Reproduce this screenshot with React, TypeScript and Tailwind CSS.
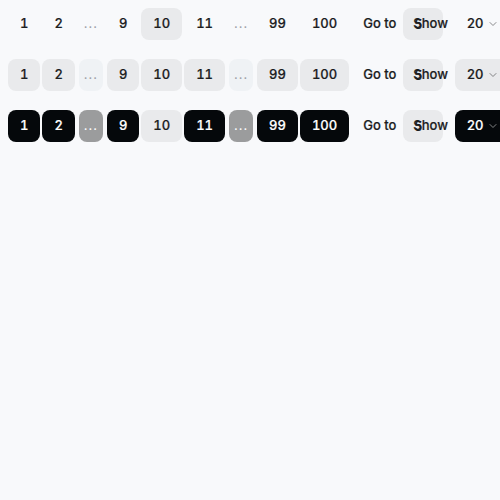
import { ChevronDown } from "lucide-react";

type Variant = "ghost" | "soft" | "solid";

const items: (number | "gap")[] = [1, 2, "gap", 9, 10, 11, "gap", 99, 100];
const current = 10;

function pageClass(variant: Variant, active: boolean) {
  if (active) return "bg-[#e9eaec] text-[#1c1d1f]";
  if (variant === "ghost") return "bg-transparent text-[#1c1d1f]";
  if (variant === "soft") return "bg-[#e9eaec] text-[#1c1d1f]";
  return "bg-[#05080b] text-white";
}

function gapClass(variant: Variant) {
  if (variant === "ghost") return "bg-transparent text-[#9ca0a6]";
  if (variant === "soft") return "bg-[#eff2f5] text-[#9ca0a6]";
  return "bg-[#9b9c9d] text-white";
}

function selectClass(variant: Variant) {
  if (variant === "ghost") return "bg-transparent text-[#1c1d1f]";
  if (variant === "soft") return "bg-[#e9eaec] text-[#1c1d1f]";
  return "bg-[#05080b] text-white";
}

function PaginationRow({ variant }: { variant: Variant }) {
  return (
    <div className="flex h-8 items-center whitespace-nowrap">
      <div className="flex items-center gap-0.5">
        {items.map((item, i) =>
          item === "gap" ? (
            <span
              key={i}
              className={`mx-0.5 flex h-8 w-6 items-center justify-center rounded-lg text-[13px] tracking-[1px] [-webkit-text-stroke:0px] ${gapClass(variant)}`}
            >
              ...
            </span>
          ) : (
            <button
              key={i}
              className={`flex h-8 items-center justify-center rounded-lg px-3 text-[13px] font-medium tabular-nums ${pageClass(variant, item === current)}`}
            >
              {item}
            </button>
          )
        )}
      </div>

      {/* go to */}
      <span className="ml-[14px] text-[13px] font-medium text-[#1c1d1f]">Go to</span>
      <input
        defaultValue="5"
        className="ml-[7px] h-8 w-10 shrink-0 rounded-lg bg-[#e9eaec] pl-[11px] text-[13px] font-medium text-[#1c1d1f] outline-none"
      />
      <span className="-ml-[30px] text-[13px] font-medium text-[#1c1d1f]">Show</span>

      {/* page size */}
      <button
        className={`ml-[7px] flex h-8 shrink-0 items-center gap-1 rounded-lg pl-3 pr-8 text-[13px] font-medium ${selectClass(variant)}`}
      >
        20
        <ChevronDown size={12} className="opacity-50" />
      </button>
    </div>
  );
}

export default function App() {
  return (
    <div className="min-h-screen w-full overflow-hidden bg-[#f8f9fb] p-2 font-['Inter',sans-serif] [-webkit-text-stroke:0.2px_currentColor]">
      <div className="flex flex-col gap-[19px]">
        <PaginationRow variant="ghost" />
        <PaginationRow variant="soft" />
        <PaginationRow variant="solid" />
      </div>
    </div>
  );
}
